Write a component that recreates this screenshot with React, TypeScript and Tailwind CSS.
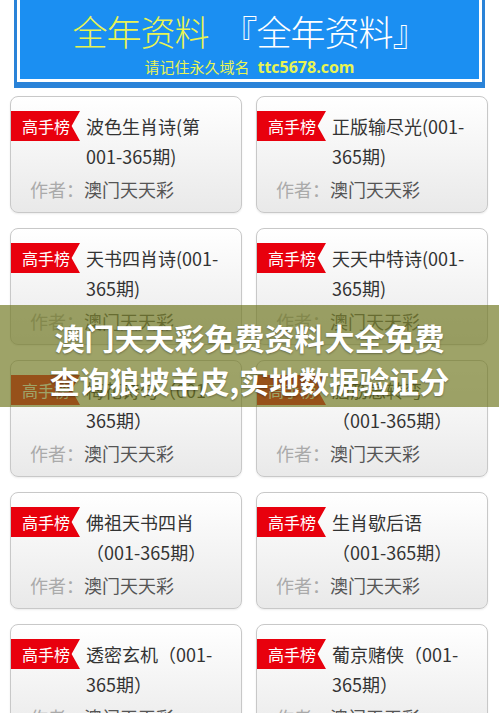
import React from 'react';

const cards = [
  ['波色生肖诗(第001-365期)', '正版输尽光(001-365期)'],
  ['天书四肖诗(001-365期)', '天天中特诗(001-365期)'],
  ['梅花诗句（001-365期）', '脑筋急转弯（001-365期）'],
  ['佛祖天书四肖（001-365期）', '生肖歇后语（001-365期）'],
  ['透密玄机（001-365期）', '葡京赌侠（001-365期）'],
];

function Card({ title }: { title: string }) {
  return (
    <div className="h-[117px] overflow-hidden rounded-[8px] border border-[#c8c8c8] bg-gradient-to-b from-white to-[#e9e9e9] pt-[14px] shadow-[0_1px_2px_rgba(0,0,0,0.08)]">
      <div className="flex items-start">
        <div className="-ml-px flex h-[30px] w-[70px] flex-none items-center pl-[12px] text-[16px] leading-none text-white [clip-path:polygon(0_0,100%_0,88%_50%,100%_100%,0_100%)] bg-[#e8000d]">
          高手榜
        </div>
        <div className="ml-[6px] w-[140px] text-[18px] leading-[30px] text-[#333]">{title}</div>
      </div>
      <div className="mt-[3px] pl-[19px] text-[18px] leading-[30px]">
        <span className="text-[#aaa]">作者：</span>
        <span className="text-[#555]">澳门天天彩</span>
      </div>
    </div>
  );
}

export default function App() {
  return (
    <div
      className="relative min-h-[713px] overflow-hidden bg-white"
      style={{ fontFamily: '"Noto Sans CJK SC", "Noto Sans", sans-serif' }}
    >
      {/* Header banner */}
      <div className="mx-[14px] w-[471px] bg-[#2a83d8] px-[3px] pb-[6px]">
        <div className="flex h-[82px] flex-col items-center border-x-[3px] border-b-[3px] border-white bg-[#1b8ff2] pt-[9px]">
          <div className="text-[35px] leading-[44px] font-light tracking-[-1px]">
            <span className="text-[#e9f452]">全年资料</span>
            <span className="ml-[14px] text-white">『全年资料』</span>
          </div>
          <div className="mt-[4px] flex items-center leading-[20px]">
            <span className="text-[15px] text-[#e9f452]">请记住永久域名</span>
            <span className="ml-[8px] text-[16px] font-bold text-[#e9f452]" style={{ fontFamily: '"Open Sans", sans-serif' }}>
              ttc5678.com
            </span>
          </div>
        </div>
      </div>

      {/* Cards */}
      <div className="flex flex-col gap-[15px] pt-[8px] pl-[10px] pr-[11px]">
        {cards.map((row, i) => (
          <div key={i} className="grid grid-cols-2 gap-[14px]">
            <Card title={row[0]} />
            <Card title={row[1]} />
          </div>
        ))}
      </div>

      {/* Overlay caption */}
      <div className="absolute left-0 right-0 top-[305px] flex h-[102px] justify-center bg-[rgba(112,120,32,0.68)] pt-[11px]">
        <div className="h-[86px] w-[412px] overflow-hidden text-center text-[30px] font-bold leading-[43px] text-white [text-shadow:0_1px_2px_rgba(0,0,0,0.35)]">
          澳门天天彩免费资料大全免费查询狼披羊皮,实地数据验证分析
        </div>
      </div>
    </div>
  );
}
